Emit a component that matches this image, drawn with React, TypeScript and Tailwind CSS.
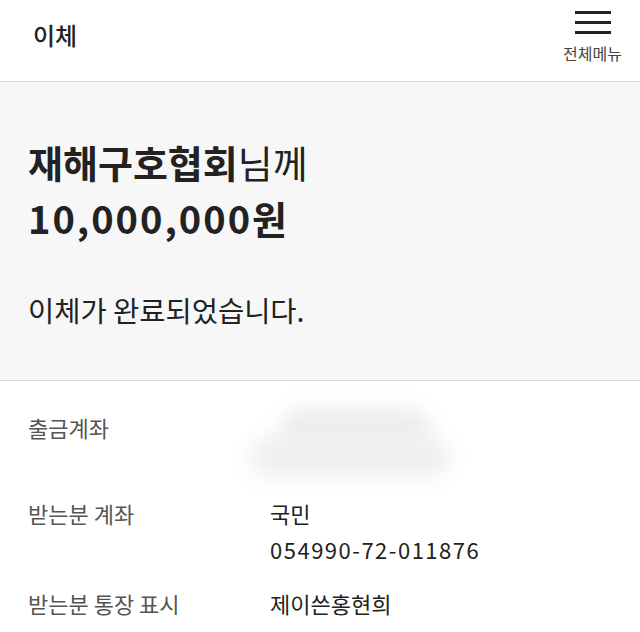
const font = { fontFamily: '"Noto Sans CJK KR", "Noto Sans", sans-serif' };

function MenuIcon() {
  return (
    <svg width="36" height="26" viewBox="0 0 36 26" className="text-[#222]">
      <rect x="0" y="1" width="36" height="3" fill="currentColor" />
      <rect x="0" y="11" width="36" height="3" fill="currentColor" />
      <rect x="0" y="21" width="36" height="3" fill="currentColor" />
    </svg>
  );
}

const rows = [
  { label: "받는분 계좌", value: ["국민", "054990-72-011876"] },
  { label: "받는분 통장 표시", value: ["제이쓴홍현희"] },
];

export default function App() {
  return (
    <div className="w-[640px] h-[632px] overflow-hidden bg-white text-[#222]" style={font}>
      {/* Header */}
      <header className="h-[82px] flex items-start justify-between border-b border-[#dcdcdc] pl-[33px] pr-[18px]">
        <h1 className="mt-[18px] text-[24px] font-medium leading-[34px]">이체</h1>
        <button className="mt-[10px] flex flex-col items-center gap-[8px]">
          <MenuIcon />
          <span className="text-[16px] leading-[18px] text-[#444]">전체메뉴</span>
        </button>
      </header>

      {/* Result */}
      <section className="h-[299px] bg-[#f7f7f7] border-b border-[#d8d8d8] px-[28px] pt-[52px]">
        <p className="text-[38px] leading-[56px]">
          <span className="font-bold">재해구호협회</span>님께
        </p>
        <p className="text-[38px] leading-[56px] font-bold tracking-[2px]">10,000,000원</p>
        <p className="mt-[44px] text-[28.5px] leading-[40px]">이체가 완료되었습니다.</p>
      </section>

      {/* Details */}
      <section className="px-[28px] pt-[30px]">
        <div className="flex h-[84px]">
          <div className="w-[242px] shrink-0 text-[22px] leading-[32px] text-[#555]">출금계좌</div>
          {/* masked account number */}
          <div className="relative flex-1">
            <div className="absolute left-[10px] -top-[4px] h-[46px] w-[150px] rounded-[24px] bg-[#ededed] blur-[10px]" />
            <div className="absolute -left-[20px] top-[26px] h-[40px] w-[200px] rounded-[24px] bg-[#efefef] blur-[10px]" />
          </div>
        </div>
        <div className="flex flex-col gap-[18px]">
          {rows.map((r) => (
            <div key={r.label} className="flex">
              <div className="w-[242px] shrink-0 text-[22px] leading-[36px] text-[#555]">{r.label}</div>
              <div className="text-[22px] leading-[36px] text-[#222]">
                {r.value.map((v) => (
                  <div key={v} className={/\d/.test(v) ? "tracking-[1.5px]" : ""}>
                    {v}
                  </div>
                ))}
              </div>
            </div>
          ))}
        </div>
      </section>
    </div>
  );
}
